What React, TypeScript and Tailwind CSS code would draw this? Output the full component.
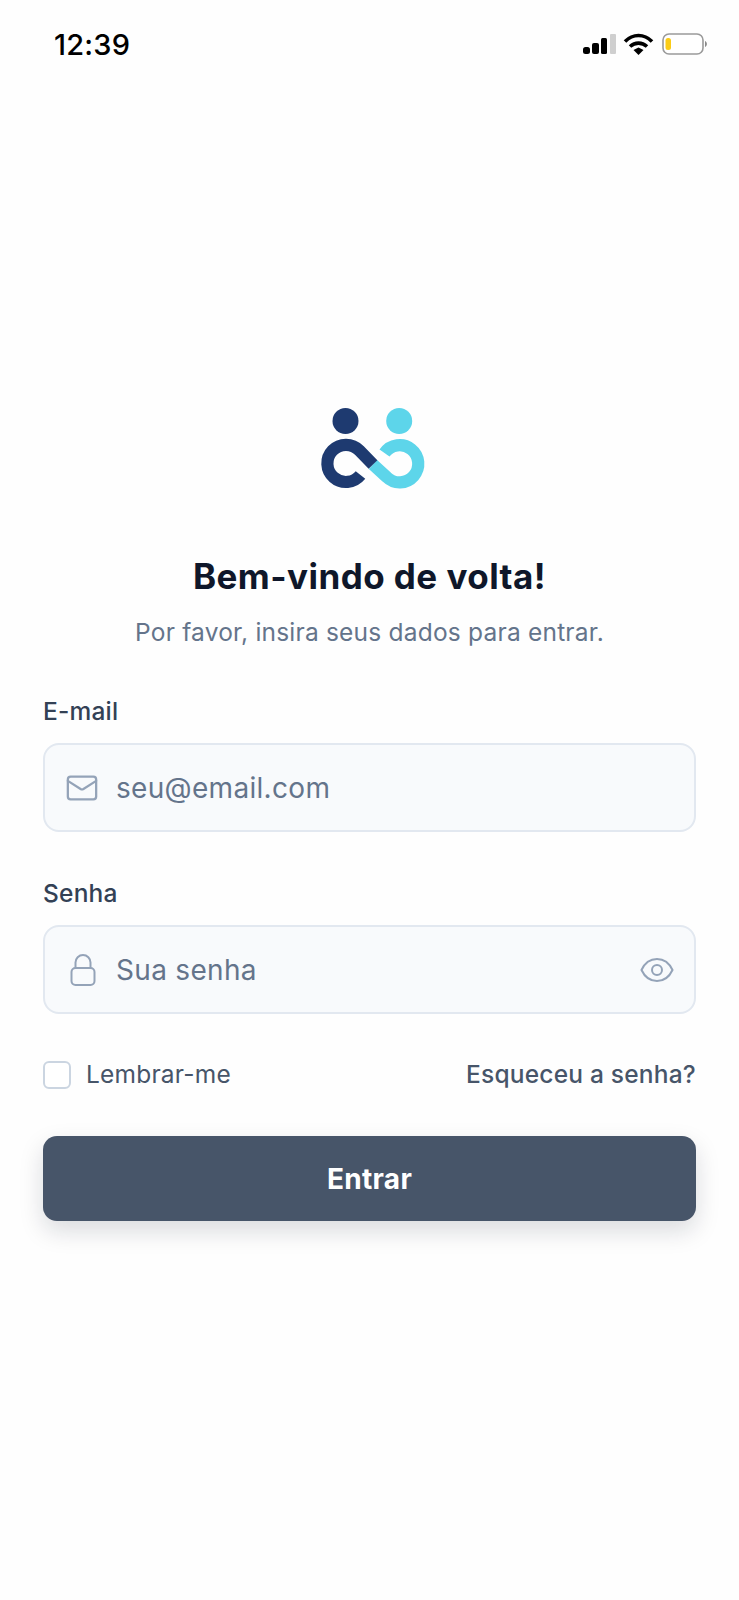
import React from 'react';
import { Mail } from 'lucide-react';

const StatusBar = () => (
  <div className="h-[90px] flex justify-between items-start pl-[54px] pr-[31px] pt-[27px]">
    <span className="text-[29px] leading-[36px] font-medium text-black">12:39</span>
    <svg width="125" height="24" viewBox="583 33 125 24" className="mt-[6px]">
      <rect x="583" y="47" width="7" height="7" rx="2.5" fill="#000" />
      <rect x="592" y="43" width="7" height="11" rx="2" fill="#000" />
      <rect x="601" y="38" width="6" height="16" rx="1.5" fill="#000" />
      <rect x="610" y="34" width="6" height="20" rx="1" fill="#cfcfcf" />
      <path d="M625 41.5 C633 33.5 644 33.5 652 41.5" fill="none" stroke="#000" strokeWidth="3.6" />
      <path d="M630 46.5 C635 42 642 42 647 46.5" fill="none" stroke="#000" strokeWidth="3.6" />
      <path d="M633.5 50 L638.5 47.5 L643.5 50 L638.5 55 Z" fill="#000" />
      <rect x="663" y="34" width="40" height="20" rx="6" fill="#fff" stroke="#9a9a9a" strokeWidth="1.6" />
      <rect x="665.5" y="38" width="5.5" height="12" rx="2.5" fill="#fbcc16" />
      <path d="M705 41 C707.5 42 707.5 46 705 47 Z" fill="#8a8a8a" />
    </svg>
  </div>
);

const Logo = () => (
  <svg width="112" height="92" viewBox="314 404 112 92">
    <circle cx="345.5" cy="421" r="13" fill="#1e3a70" />
    <circle cx="399.2" cy="421" r="13" fill="#5dd5ea" />
    <path d="M373 464.5 L386.6 477 A18.6 18.6 0 1 0 384.5 453" fill="none" stroke="#5dd5ea" strokeWidth="12.2" />
    <path d="M360.5 475 A18.6 18.6 0 1 1 359.4 450.5 L373 464.5" fill="none" stroke="#1e3a70" strokeWidth="12.2" />
  </svg>
);

const LockIcon = () => (
  <svg width="32" height="34" viewBox="0 0 32 34" fill="none" stroke="#94a3b8" strokeWidth="2" className="shrink-0">
    <rect x="4.5" y="15" width="23" height="17" rx="4" />
    <path d="M8.5 15 V9.5 A7.5 7.5 0 0 1 23.5 9.5 V15" />
  </svg>
);

const EyeIcon = () => (
  <svg width="34" height="26" viewBox="0 0 34 26" fill="none" stroke="#94a3b8" strokeWidth="2" className="shrink-0">
    <path d="M1.5 13 C5 5.5 10.5 2 17 2 C23.5 2 29 5.5 32.5 13 C29 20.5 23.5 24 17 24 C10.5 24 5 20.5 1.5 13 Z" />
    <circle cx="17" cy="13" r="5" />
  </svg>
);

const App: React.FC = () => {
  return (
    <div className="w-[739px] min-h-[1600px] bg-[#fefefe] font-['Inter',sans-serif] tracking-[0.013em]">
      <StatusBar />

      <div className="px-[43px] flex flex-col">
        <div className="flex justify-center mt-[314px]">
          <Logo />
        </div>

        <h1 className="text-[35px] leading-[44px] font-bold tracking-[0.013em] text-[#0f172a] text-center mt-[58px]">
          Bem-vindo de volta!
        </h1>
        <p className="text-[24.5px] leading-[35px] text-[#64748b] text-center mt-[17px]">
          Por favor, insira seus dados para entrar.
        </p>

        <label className="text-[24.5px] leading-[35px] font-medium text-[#334155] mt-[44px]">E-mail</label>
        <div className="mt-[14px] h-[89px] rounded-[16px] border-2 border-[#e2e8f0] bg-[#f8fafc] flex items-center pl-[20px] pr-[20px]">
          <Mail className="w-[34px] h-[34px] text-[#94a3b8] shrink-0" strokeWidth={1.6} />
          <input
            placeholder="seu@email.com"
            className="ml-[17px] flex-1 bg-transparent outline-none text-[28px] tracking-[0.011em] placeholder:text-[#64748b]"
          />
        </div>

        <label className="text-[24.5px] leading-[35px] font-medium text-[#334155] mt-[44px]">Senha</label>
        <div className="mt-[14px] h-[89px] rounded-[16px] border-2 border-[#e2e8f0] bg-[#f8fafc] flex items-center pl-[22px] pr-[20px]">
          <LockIcon />
          <input
            placeholder="Sua senha"
            className="ml-[17px] flex-1 bg-transparent outline-none text-[28px] tracking-[0.011em] placeholder:text-[#64748b]"
          />
          <EyeIcon />
        </div>

        <div className="flex items-center justify-between mt-[43px]">
          <div className="flex items-center">
            <div className="w-[28px] h-[28px] rounded-[6px] border-2 border-[#cbd5e1] bg-white" />
            <span className="ml-[15px] text-[24.5px] leading-[35px] text-[#475569]">Lembrar-me</span>
          </div>
          <span className="text-[24.5px] leading-[35px] font-medium text-[#475569]">Esqueceu a senha?</span>
        </div>

        <button className="mt-[44px] h-[85px] rounded-[14px] bg-[#475569] text-white text-[28px] font-bold tracking-[0.011em] shadow-[0_10px_25px_rgba(15,23,42,0.15)]">
          Entrar
        </button>
      </div>
    </div>
  );
};

export default App;
